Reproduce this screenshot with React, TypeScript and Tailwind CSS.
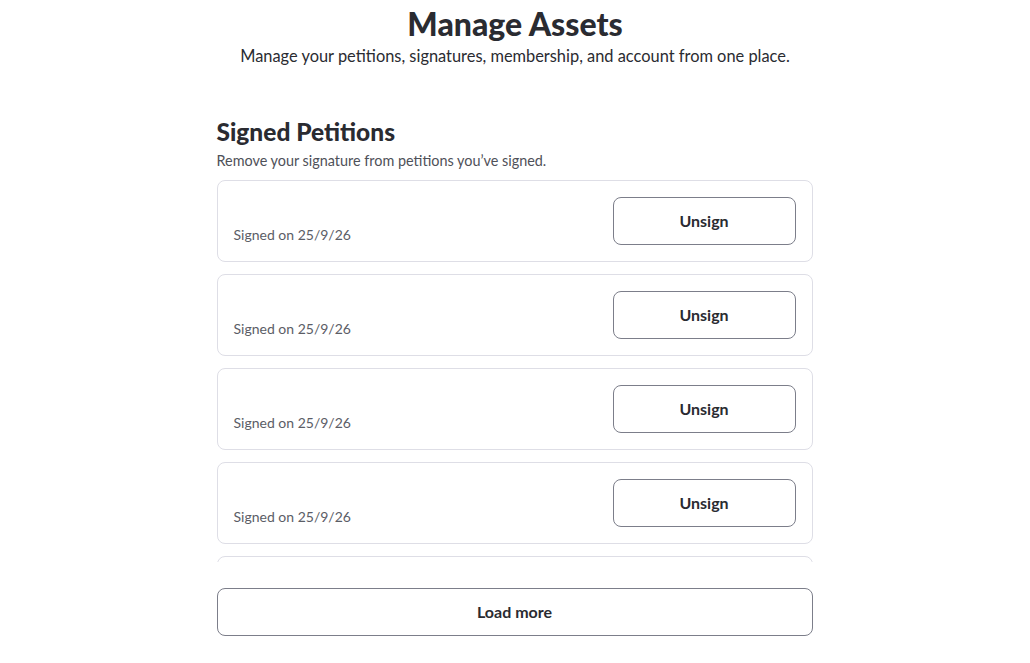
import { useState } from 'react';

const signatures = [
  { id: 1, signedOn: '25/9/26' },
  { id: 2, signedOn: '25/9/26' },
  { id: 3, signedOn: '25/9/26' },
  { id: 4, signedOn: '25/9/26' },
  { id: 5, signedOn: '25/9/26' },
];

function SignatureRow({ signedOn }: { signedOn: string }) {
  return (
    <div className="flex items-end justify-between rounded-[8px] border border-[#dedee6] bg-white p-4">
      <div className="flex flex-col">
        <span className="text-[14px] leading-5 text-[#5b5d66]">Signed on {signedOn}</span>
      </div>
      <button className="h-12 w-[183px] rounded-[8px] border border-[#7c7e8a] text-[16px] font-bold text-[#2a2b31]">
        Unsign
      </button>
    </div>
  );
}

export default function App() {
  const [items] = useState(signatures);

  return (
    <div className="min-h-screen bg-white font-['Lato','Noto_Sans',sans-serif] text-[#2a2b31]">
      <div className="flex flex-col items-center pt-[4px]">
        <h1 className="text-[32px] font-black leading-[40px]">Manage Assets</h1>
        <p className="text-[16.4px] leading-6">
          Manage your petitions, signatures, membership, and account from one place.
        </p>
      </div>

      {/* Signed petitions */}
      <section className="mx-auto mt-12 w-[597px] pr-px">
        <h2 className="text-[24.5px] font-black leading-8">Signed Petitions</h2>
        <p className="mt-[3px] text-[14.4px] leading-5 text-[#4f5159]">
          Remove your signature from petitions you’ve signed.
        </p>

        <div className="mt-[9px] flex max-h-[382px] flex-col gap-3 overflow-hidden">
          {items.map(s => (
            <SignatureRow key={s.id} signedOn={s.signedOn} />
          ))}
        </div>

        <button className="mt-[26px] h-12 w-full rounded-[8px] border border-[#7c7e8a] text-[16px] font-bold text-[#2a2b31]">
          Load more
        </button>
      </section>
    </div>
  );
}
